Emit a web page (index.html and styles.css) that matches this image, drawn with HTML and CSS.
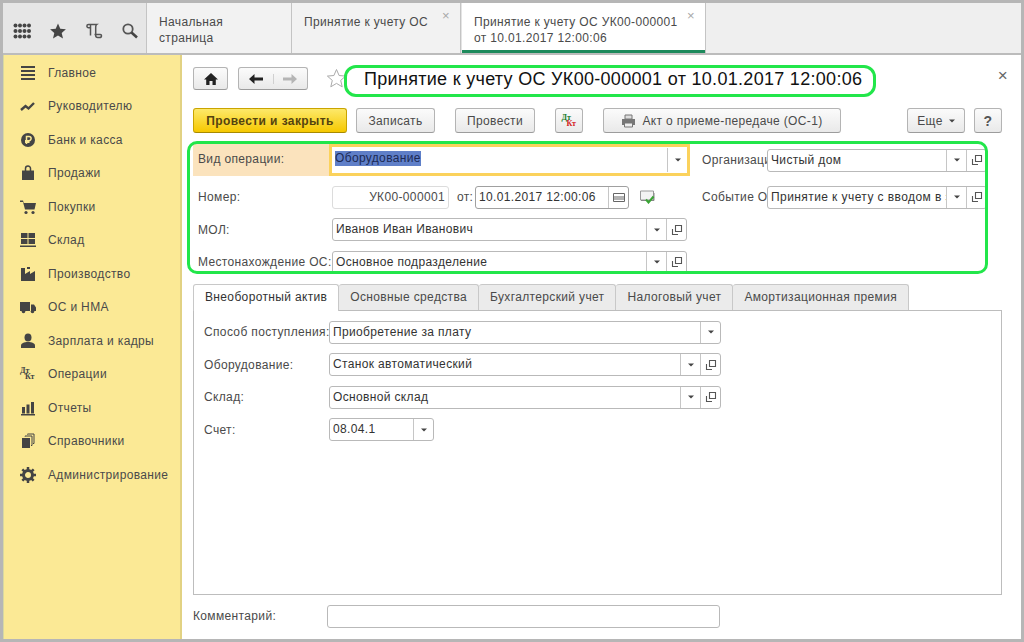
FILE: index.html
```html
<!DOCTYPE html>
<html>
	<head>
		<meta charset="UTF-8">
		<title>Принятие к учету ОС</title>
		<link rel="stylesheet" href="styles.css">
	</head>
	<body>
		<svg class="defs" width="0" height="0">
			<symbol id="open" viewBox="0 0 12 12">
				<path d="M4.5 1.5h6v6h-6z M1.5 5v5.5H7" fill="none" stroke="#555" stroke-width="1.1"/>
			</symbol>
			<symbol id="caret" viewBox="0 0 6 4">
				<path d="M0 .5h6L3 3.5z" fill="#444"/>
			</symbol>
		</svg>
		<div class="app">
			<div class="topbar">
				<div class="tools">
					<svg class="tool" width="18" height="18" viewBox="0 0 18 18" fill="#454545">
						<circle cx="2.5" cy="3.5" r="2"/><circle cx="7" cy="3.5" r="2"/><circle cx="11.5" cy="3.5" r="2"/><circle cx="16" cy="3.5" r="2"/>
						<circle cx="2.5" cy="9" r="2"/><circle cx="7" cy="9" r="2"/><circle cx="11.5" cy="9" r="2"/><circle cx="16" cy="9" r="2"/>
						<circle cx="2.5" cy="14.5" r="2"/><circle cx="7" cy="14.5" r="2"/><circle cx="11.5" cy="14.5" r="2"/><circle cx="16" cy="14.5" r="2"/>
					</svg>
					<svg class="tool" width="18" height="18" viewBox="0 0 18 18"><path d="M9 1.5l2.3 5.2 5.6.5-4.2 3.8 1.3 5.5L9 13.6l-5 2.9 1.3-5.5L1.1 7.2l5.6-.5z" fill="#454545"/></svg>
					<svg class="tool" width="18" height="18" viewBox="0 0 18 18"><path d="M5 2.5H3.5a1.6 1.6 0 0 0 0 3.2H5M4.5 2.5h7.2c-.8.6-1 1.4-1 2.4v8.6c0 1.200.8 2 2 2h1.800c1.200 0 2-.8 2-1.800 0-.8-.4-1.300-1.200-1.300H9.500M5.500 2.500v11" fill="none" stroke="#555" stroke-width="1.500"/></svg>
					<svg class="tool" width="18" height="18" viewBox="0 0 18 18"><circle cx="7" cy="7" r="4.700" fill="none" stroke="#555" stroke-width="1.800"/><path d="M10.500 10.500l5.500 5" stroke="#444" stroke-width="2.600"/></svg>
				</div>
				<div class="tab tab-home">Начальная страница</div>
				<div class="tab tab-doc">Принятие к учету ОС<span class="tab-x">×</span></div>
				<div class="tab tab-active">Принятие к учету ОС УК00-000001<br>от 10.01.2017 12:00:06<span class="tab-x">×</span></div>
			</div>
			<div class="body">
				<ul class="menu">
					<li><svg width="16" height="16" viewBox="0 0 16 16" fill="#444"><path d="M1 1h14v2H1zM1 5h14v2H1zM1 9h14v2H1zM1 13h14v2H1z"/></svg>Главное</li>
					<li><svg width="16" height="16" viewBox="0 0 16 16"><path d="M1 12l4.500-4 3 2.500L14 5" fill="none" stroke="#444" stroke-width="2.400"/></svg>Руководителю</li>
					<li><svg width="16" height="16" viewBox="0 0 16 16"><circle cx="8" cy="8" r="7" fill="#444"/><path d="M6.500 12V4.500h2.500a2 2 0 0 1 0 4.200H5M5 10.300h4.500" fill="none" stroke="#fbe995" stroke-width="1.500"/></svg>Банк и касса</li>
					<li><svg width="16" height="16" viewBox="0 0 16 16" fill="#444"><path d="M2 5.500h12V15H2z"/><path d="M5.500 6V3.500a2.500 2.500 0 0 1 5 0V6" fill="none" stroke="#444" stroke-width="1.500"/></svg>Продажи</li>
					<li><svg width="16" height="16" viewBox="0 0 16 16" fill="#444"><path d="M0 1.500h3l.8 2.500H16l-1.500 6.500H5L3 3H0z"/><circle cx="6" cy="13.500" r="1.600"/><circle cx="13" cy="13.500" r="1.600"/></svg>Покупки</li>
					<li><svg width="16" height="16" viewBox="0 0 16 16" fill="#444"><path d="M1 1h6.500v5H1zM8.500 1H15v5H8.500zM1 7h6.500v5H1zM8.500 7H15v5H8.500zM0 13.500h16V15H0z"/></svg>Склад</li>
					<li><svg width="16" height="16" viewBox="0 0 16 16" fill="#444"><path d="M1 15V2h4v6l5-3v3l5-3v10z"/><path d="M7 1h3v2H7z"/></svg>Производство</li>
					<li><svg width="16" height="16" viewBox="0 0 16 16" fill="#444"><path d="M0 3h10v9H0zM11 5.500h3l2 3V12h-5z"/><circle cx="3.500" cy="12.500" r="1.800"/><circle cx="12.500" cy="12.500" r="1.800"/></svg>ОС и НМА</li>
					<li><svg width="16" height="16" viewBox="0 0 16 16" fill="#444"><ellipse cx="8" cy="4.500" rx="3.500" ry="4"/><path d="M1 15v-2.500c0-2 3-3.500 7-3.500s7 1.500 7 3.500V15z"/></svg>Зарплата и кадры</li>
					<li><span class="dtkt dtkt-menu"><b>Дт</b><b>Кт</b></span>Операции</li>
					<li><svg width="16" height="16" viewBox="0 0 16 16" fill="#444"><path d="M2 7h3v6.500H2zM6.500 4.500h3v9h-3zM11 2h3v11.500h-3zM1 14h14v1.500H1z"/></svg>Отчеты</li>
					<li><svg width="16" height="16" viewBox="0 0 16 16" fill="#444"><path d="M2 5h8v10H2z"/><path d="M5 3.500V3h7v9.500h-1M7.500 1.500V1H14v9.500h-1" fill="none" stroke="#444"/></svg>Справочники</li>
					<li><svg width="16" height="16" viewBox="0 0 16 16"><circle cx="8" cy="8" r="4.500" fill="none" stroke="#444" stroke-width="3"/><path d="M8 0v16M0 8h16M2.300 2.300l11.400 11.400M13.700 2.300L2.300 13.700" stroke="#444" stroke-width="2.500" stroke-dasharray="3 10 3 0"/></svg>Администрирование</li>
				</ul>
				<div class="main">
					<div class="navrow">
						<div class="btn btn-home"><svg width="14" height="12" viewBox="0 0 14 12"><path d="M7 0L0 6.500h2.200V12h3.300V8h3v4h3.300V6.500H14z" fill="#222"/></svg></div>
						<div class="btn btn-arrows">
							<span class="arrow"><svg width="14" height="10" viewBox="0 0 14 10"><path d="M0 5l5.500-5v3.500H14v3H5.500V10z" fill="#222"/></svg></span>
							<span class="arrow"><svg width="14" height="10" viewBox="0 0 14 10"><path d="M14 5L8.500 0v3.500H0v3h8.500V10z" fill="#b5b5b5"/></svg></span>
						</div>
						<svg class="star" width="21" height="21" viewBox="0 0 21 21"><path d="M10.500 1.500l2.600 6 6.500.6-4.900 4.300 1.500 6.400-5.700-3.400-5.700 3.400 1.500-6.400L1.400 8.100l6.500-.6z" fill="#fff" stroke="#aaa"/></svg>
						<h1 class="title">Принятие к учету ОС УК00-000001 от 10.01.2017 12:00:06</h1>
						<span class="close">×</span>
					</div>
					<div class="cmdrow">
						<div class="btn btn-main">Провести и закрыть</div>
						<div class="btn btn-write">Записать</div>
						<div class="btn btn-post">Провести</div>
						<div class="btn btn-dt"><span class="dtkt"><b>Дт</b><b>Кт</b></span></div>
						<div class="btn btn-act">
							<svg width="15" height="14" viewBox="0 0 15 14"><path d="M4 1h7v4H4z" fill="#ddd" stroke="#777"/><path d="M1 5h13v6H1z" fill="#777"/><path d="M3.500 9h8v4h-8z" fill="#eee" stroke="#777"/></svg>
							Акт о приеме-передаче (ОС-1)
						</div>
						<div class="btn btn-more">Еще<svg class="caret" width="6" height="4"><use href="#caret"/></svg></div>
						<div class="btn btn-help">?</div>
					</div>
					<div class="form">
						<div class="label label-hot">Вид операции:</div>
						<div class="hot">
							<div class="field">
								<div class="val"><span class="sel">Оборудование</span></div>
								<div class="drop"><svg width="6" height="4"><use href="#caret"/></svg></div>
							</div>
						</div>
						<div class="label label-r">Организация:</div>
						<div class="field field-c">
							<div class="val">Чистый дом</div>
							<div class="drop"><svg width="6" height="4"><use href="#caret"/></svg></div>
							<div class="drop"><svg width="12" height="12"><use href="#open"/></svg></div>
						</div>

						<div class="label">Номер:</div>
						<div class="numrow">
							<div class="field field-num"><div class="val">УК00-000001</div></div>
							<span class="label-from">от:</span>
							<div class="field field-date">
								<div class="val">10.01.2017 12:00:06</div>
								<div class="drop">
									<svg width="12" height="9" viewBox="0 0 12 9"><path d="M.5.500h11v8H.5z" fill="none" stroke="#666"/><path d="M2 3v4M4 3v4M6 3v4M8 3v4M10 3v4" stroke="#666"/></svg>
								</div>
							</div>
							<svg class="doc-ok" width="16" height="14" viewBox="0 0 16 14"><path d="M.5 1h13v9H.5z" fill="#f3f3f3" stroke="#999"/><path d="M1 10.500h13V3" fill="none" stroke="#888"/><path d="M6 9.500l2.500 3 5-6" fill="none" stroke="#3aa535" stroke-width="2"/></svg>
						</div>
						<div class="label label-r">Событие ОС:</div>
						<div class="field field-c">
							<div class="val val-cut">Принятие к учету с вводом в эксплуатацию</div>
							<div class="drop"><svg width="6" height="4"><use href="#caret"/></svg></div>
							<div class="drop"><svg width="12" height="12"><use href="#open"/></svg></div>
						</div>

						<div class="label">МОЛ:</div>
						<div class="field">
							<div class="val">Иванов Иван Иванович</div>
							<div class="drop"><svg width="6" height="4"><use href="#caret"/></svg></div>
							<div class="drop"><svg width="12" height="12"><use href="#open"/></svg></div>
						</div>
						<div class="form-gap"></div>

						<div class="label">Местонахождение ОС:</div>
						<div class="field">
							<div class="val">Основное подразделение</div>
							<div class="drop"><svg width="6" height="4"><use href="#caret"/></svg></div>
							<div class="drop"><svg width="12" height="12"><use href="#open"/></svg></div>
						</div>
					</div>
					<div class="tabs">
						<div class="ptab ptab-active">Внеоборотный актив</div>
						<div class="ptab">Основные средства</div>
						<div class="ptab">Бухгалтерский учет</div>
						<div class="ptab">Налоговый учет</div>
						<div class="ptab">Амортизационная премия</div>
					</div>
					<div class="panel">
						<div class="prow">
							<div class="plabel">Способ поступления:</div>
							<div class="field field-p">
								<div class="val">Приобретение за плату</div>
								<div class="drop"><svg width="6" height="4"><use href="#caret"/></svg></div>
							</div>
						</div>
						<div class="prow">
							<div class="plabel">Оборудование:</div>
							<div class="field field-p">
								<div class="val">Станок автоматический</div>
								<div class="drop"><svg width="6" height="4"><use href="#caret"/></svg></div>
								<div class="drop"><svg width="12" height="12"><use href="#open"/></svg></div>
							</div>
						</div>
						<div class="prow">
							<div class="plabel">Склад:</div>
							<div class="field field-p">
								<div class="val">Основной склад</div>
								<div class="drop"><svg width="6" height="4"><use href="#caret"/></svg></div>
								<div class="drop"><svg width="12" height="12"><use href="#open"/></svg></div>
							</div>
						</div>
						<div class="prow">
							<div class="plabel">Счет:</div>
							<div class="field field-acc">
								<div class="val">08.04.1</div>
								<div class="drop"><svg width="6" height="4"><use href="#caret"/></svg></div>
							</div>
						</div>
					</div>
					<div class="comment">
						<div class="comment-label">Комментарий:</div>
						<div class="field field-comment"></div>
					</div>
				</div>
			</div>
		</div>
		<!-- green marks drawn over the screen -->
		<div class="mark mark-title"></div>
		<div class="mark mark-form"></div>
	</body>
</html>
```

FILE: styles.css
```css
*{
	padding: 0;
	margin: 0;
	box-sizing: border-box;
}
html,body{
	height: 642px;
	overflow: hidden;
}
body{
	position: relative;
	background: #b6b6b6;
	padding: 3px;
	font: 12px/16px "Liberation Sans", Arial, sans-serif;
	letter-spacing: .35px;
	color: #4a4a4a;
}
.defs{
	position: absolute;
}
.app{
	height: 636px;
	display: flex;
	flex-direction: column;
	background: #fff;
}

/* top bar */
.topbar{
	height: 52px;
	flex: none;
	display: flex;
	background: #efefef;
	border-bottom: 2px solid #bcbcbc;
}
.tools{
	width: 144px;
	display: flex;
	align-items: center;
	gap: 18px;
	padding: 6px 0 0 10px;
	background: #e6e6e6;
	border-right: 1px solid #c4c4c4;
}
.tool{
	flex: none;
}
.tab{
	position: relative;
	padding: 11px 12px 0 12px;
	background: #f2f2f2;
	border-right: 1px solid #c4c4c4;
}
.tab-home{
	width: 145px;
}
.tab-doc{
	width: 169px;
}
.tab-active{
	width: 245px;
	height: 50px;
	background: #fff;
	border-right: 1px solid #c4c4c4;
	border-left: 1px solid #e4e4e4;
	box-shadow: inset 0 -3px 0 #1d8a5c;
}
.tab-x{
	position: absolute;
	top: 6px;
	right: 10px;
	font-size: 13px;
	line-height: 14px;
	color: #a8a8a8;
}

.body{
	flex: 1;
	display: flex;
	min-height: 0;
}

/* left menu */
.menu{
	width: 179px;
	flex: none;
	list-style: none;
	padding-top: 1px;
	background: #fbe995;
	border-right: 2px solid #e2d283;
	border-left: 1px solid #d8d8a0;
}
.menu li{
	height: 33.5px;
	display: flex;
	align-items: center;
	padding-left: 16px;
	color: #4a4a4a;
}
.menu svg,
.dtkt-menu{
	flex: none;
	margin-right: 12px;
}

/* form area */
.main{
	flex: 1;
	display: flex;
	flex-direction: column;
	padding: 12px 19px 0 11px;
	min-width: 0;
}
.navrow{
	position: relative;
	height: 23px;
	display: flex;
	align-items: center;
}
.btn{
	height: 25px;
	display: flex;
	align-items: center;
	justify-content: center;
	background: linear-gradient(#fbfbfb, #e9e9e9);
	border: 1px solid #b4b4b4;
	border-bottom-color: #9c9c9c;
	border-radius: 3px;
	color: #4a4a4a;
}
.btn-home{
	width: 35px;
	height: 23px;
}
.btn-arrows{
	width: 70px;
	height: 23px;
	margin-left: 10px;
}
.arrow{
	flex: 1;
	display: flex;
	justify-content: center;
}
.arrow + .arrow{
	border-left: 1px solid #d0d0d0;
}
.star{
	margin-left: 18px;
}
.title{
	margin-left: 17px;
	font-size: 18px;
	line-height: 24px;
	font-weight: normal;
	letter-spacing: .3px;
	color: #111;
}
.close{
	position: absolute;
	top: 0;
	right: -6px;
	font-size: 17px;
	line-height: 18px;
	color: #666;
}

.cmdrow{
	display: flex;
	margin-top: 18px;
}
.btn-main{
	width: 154px;
	background: linear-gradient(#fde96a, #f6c800);
	border-color: #c9a400;
	border-bottom-color: #a88a00;
	font-weight: bold;
	color: #54430f;
	letter-spacing: .4px;
}
.btn-write{
	width: 79px;
	margin-left: 9px;
}
.btn-post{
	width: 80px;
	margin-left: 20px;
}
.btn-dt{
	width: 28px;
	margin-left: 20px;
}
.btn-act{
	width: 238px;
	margin-left: 20px;
	gap: 6px;
}
.btn-more{
	width: 58px;
	margin-left: 66px;
	gap: 6px;
}
.btn-help{
	width: 28px;
	margin-left: 9px;
	font-size: 14px;
	font-weight: bold;
	color: #555;
}
.dtkt{
	width: 15px;
	height: 14px;
	display: block;
	position: relative;
}
.dtkt b{
	position: absolute;
	font: bold 8px/8px "Liberation Serif", serif;
	letter-spacing: 0;
	color: #1b7d2c;
	left: 0;
	top: 0;
}
.dtkt b + b{
	left: 5px;
	top: 6px;
	color: #d42020;
}
.dtkt-menu{
	width: 16px;
}
.dtkt-menu b,
.dtkt-menu b + b{
	color: #444;
}

/* upper form grid */
.form{
	margin-top: 11px;
	display: grid;
	grid-template-columns: 139px 355px 80px 220px;
	column-gap: 0;
	grid-template-rows: 32px 23px 23px 23px;
	row-gap: 9.5px;
	align-items: center;
}
.label{
	padding-left: 5px;
	white-space: nowrap;
}
.label-hot{
	height: 32px;
	width: 136px;
	line-height: 30px;
	background: #fbe3bd;
}
.label-r{
	margin-left: 15px;
	padding-left: 0;
	width: 80px;
}
.hot{
	margin: 0 -3px;
	height: 32px;
	border: 3px solid #fbd25c;
	padding: 1px 0;
	background: #fff;
}
.hot .field{
	height: 24px;
	border: 0;
}
.form-gap{
	grid-column: span 2;
}
.field{
	height: 23px;
	display: flex;
	background: #fff;
	border: 1px solid #b9b9b9;
	border-radius: 3px;
	color: #333;
	min-width: 0;
}
.val{
	flex: 1;
	min-width: 0;
	padding-left: 3px;
	line-height: 21px;
	white-space: nowrap;
	overflow: hidden;
}
.val-cut{
	letter-spacing: .42px;
}
.sel{
	display: inline-block;
	line-height: 15px;
	background: #5f7fc8;
	color: #1c2a55;
}
.drop{
	width: 20px;
	flex: none;
	display: flex;
	align-items: center;
	justify-content: center;
	border-left: 1px solid #c6c6c6;
}
.numrow{
	display: flex;
	align-items: center;
}
.field-num{
	width: 117px;
	border-color: #dcdcdc;
}
.field-num .val{
	padding: 0 3px 0 0;
	text-align: right;
	color: #4a4a4a;
}
.label-from{
	margin: 0 4px 0 8px;
	width: 14px;
}
.field-date{
	width: 154px;
	border-color: #a0a0a0;
}
.doc-ok{
	margin-left: 11px;
}

/* tabs and their panel */
.tabs{
	display: flex;
	margin-top: 10px;
	height: 27px;
	position: relative;
}
.ptab{
	height: 26px;
	padding: 4px 11px 0;
	background: #ebebeb;
	border: 1px solid #c8c8c8;
	border-bottom: 0;
	border-left: 0;
	border-radius: 3px 3px 0 0;
	color: #4a4a4a;
	white-space: nowrap;
}
.ptab-active{
	height: 27px;
	background: #fff;
	border-left: 1px solid #c8c8c8;
	color: #333;
	z-index: 1;
}
.panel{
	height: 285px;
	margin-top: -1px;
	padding: 10px 0 0 10px;
	border: 1px solid #bdbdbd;
	display: flex;
	flex-direction: column;
	gap: 9.500px;
}
.prow{
	display: flex;
	align-items: center;
}
.plabel{
	width: 125px;
	flex: none;
	white-space: nowrap;
}
.field-p{
	width: 392px;
}
.field-acc{
	width: 105px;
}
.comment{
	display: flex;
	align-items: center;
	margin-top: 10px;
}
.comment-label{
	width: 134px;
	flex: none;
}
.field-comment{
	width: 393px;
}

/* green marks */
.mark{
	position: absolute;
	border: 3px solid #22e64a;
	pointer-events: none;
}
.mark-title{
	left: 344px;
	top: 65px;
	width: 532px;
	height: 32px;
	border-radius: 12px;
}
.mark-form{
	left: 187px;
	top: 141px;
	width: 801px;
	height: 133px;
	border-radius: 10px;
}
```
